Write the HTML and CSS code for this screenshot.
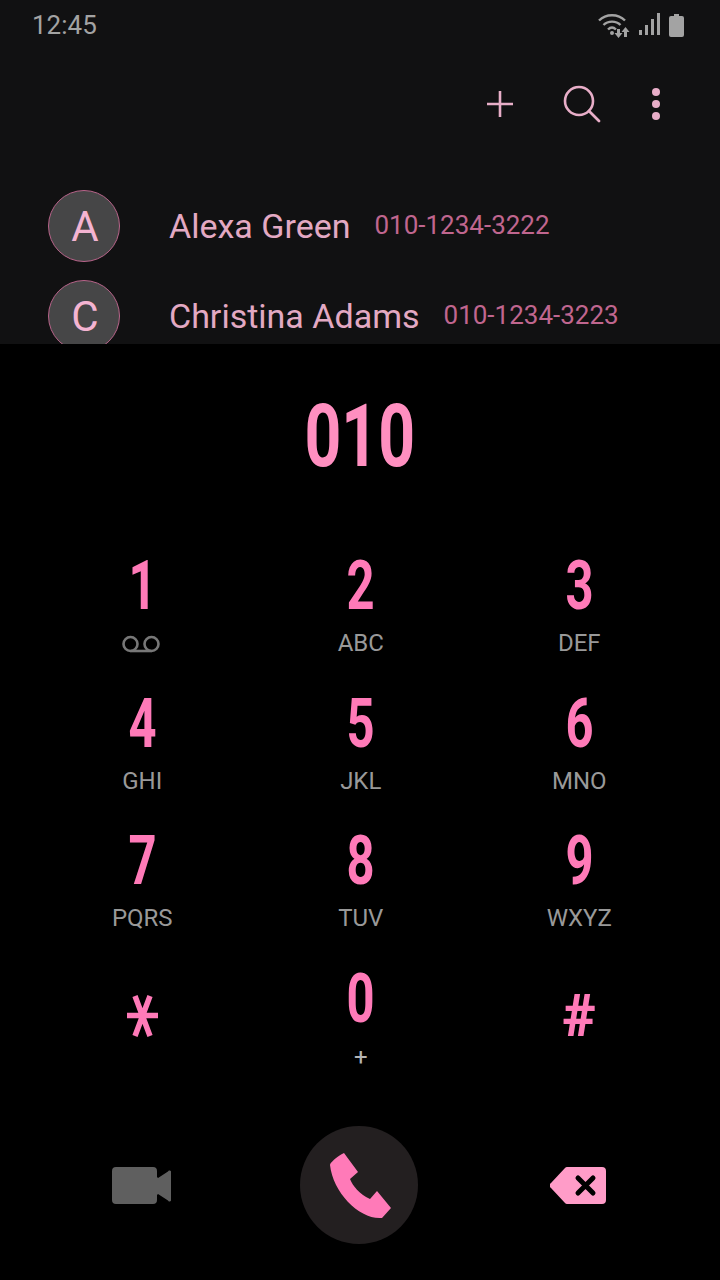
FILE: index.html
```html
<!DOCTYPE html>
<html lang="en">
<head>
<meta charset="utf-8">
<title>Phone</title>
<link rel="stylesheet" href="styles.css">
</head>
<body>
<div class="app">
  <section class="top">
    <div class="status">
      <span class="time">12:45</span>
      <div class="status-icons">
        <svg class="ic-wifi" width="32" height="26" viewBox="0 0 32 26"><g fill="none" stroke="#a3a3a3" stroke-width="2.4"><path d="M1 8.500C8 1.500 20 1.500 27 8.500"/><path d="M5.500 13C10 8.500 18 8.500 22.500 13"/><path d="M10 17.500C12.500 15 15.500 15 18 17.500"/></g><circle cx="14" cy="21" r="2" fill="#a3a3a3"/><path d="M19 17h3v4h2.500l-4 5-4-5H19zM26 25v-5h-2.500l4-5 4 5H29v5z" fill="#a3a3a3"/></svg>
        <svg class="ic-signal" width="22" height="24" viewBox="0 0 22 24"><g fill="#a3a3a3"><rect x="0" y="17" width="3" height="5"/><rect x="6" y="12" width="3" height="10"/><rect x="12" y="6" width="3" height="16"/><rect x="18" y="0" width="3" height="22"/></g></svg>
        <svg class="ic-batt" width="15" height="23" viewBox="0 0 15 23"><path d="M5 0h5v2h3a2 2 0 0 1 2 2v17a2 2 0 0 1-2 2H2a2 2 0 0 1-2-2V4a2 2 0 0 1 2-2h3z" fill="#a3a3a3"/></svg>
      </div>
    </div>
    <div class="actions">
      <svg class="act-plus" width="28" height="28" viewBox="0 0 28 28"><path d="M14 1v26M1 14h26" stroke="#e8aec8" stroke-width="2.600" fill="none"/></svg>
      <svg class="act-search" width="38" height="38" viewBox="0 0 38 38"><circle cx="16" cy="16" r="14" stroke="#e8aec8" stroke-width="2.600" fill="none"/><path d="M26 26l10 10" stroke="#e8aec8" stroke-width="2.800" stroke-linecap="round"/></svg>
      <svg class="act-more" width="10" height="34" viewBox="0 0 10 34"><g fill="#e8aec8"><circle cx="5" cy="5" r="4"/><circle cx="5" cy="17" r="4"/><circle cx="5" cy="29" r="4"/></g></svg>
    </div>
    <div class="contacts">
      <div class="contact">
        <div class="avatar">A</div>
        <span class="name">Alexa Green</span>
        <span class="phone">010-1234-3222</span>
      </div>
      <div class="contact">
        <div class="avatar">C</div>
        <span class="name">Christina Adams</span>
        <span class="phone">010-1234-3223</span>
      </div>
    </div>
  </section>
  <section class="dialer">
    <div class="entry"><span class="entry-num">010</span></div>
    <div class="keypad">
      <div class="key"><span class="digit">1</span><svg class="vm" width="40" height="18" viewBox="0 0 40 18"><g fill="none" stroke="#777" stroke-width="2.600"><circle cx="8.500" cy="9" r="7"/><circle cx="29.500" cy="9" r="7"/><path d="M8.500 16h21"/></g></svg></div>
      <div class="key"><span class="digit">2</span><span class="sub">ABC</span></div>
      <div class="key"><span class="digit">3</span><span class="sub">DEF</span></div>
      <div class="key"><span class="digit">4</span><span class="sub">GHI</span></div>
      <div class="key"><span class="digit">5</span><span class="sub">JKL</span></div>
      <div class="key"><span class="digit">6</span><span class="sub">MNO</span></div>
      <div class="key"><span class="digit">7</span><span class="sub">PQRS</span></div>
      <div class="key"><span class="digit">8</span><span class="sub">TUV</span></div>
      <div class="key"><span class="digit">9</span><span class="sub">WXYZ</span></div>
      <div class="key key-sym"><svg class="star" width="31" height="42" viewBox="0 0 31 42"><path d="M8 1l15 40M23 1L8 41M0 20.500h31" stroke="#ff7ab8" stroke-width="5.500" fill="none"/></svg></div>
      <div class="key"><span class="digit">0</span><span class="sub sub-plus">+</span></div>
      <div class="key key-sym"><span class="digit hash">#</span></div>
    </div>
    <div class="bottom">
      <div class="slot">
        <svg class="soft" width="60" height="38" viewBox="0 0 60 38"><path d="M4 1h37a4 4 0 0 1 4 4v6l1 1 10-6.500a1.500 1.500 0 0 1 3 1v27a1.500 1.500 0 0 1-3 1L46 28l-1 1v5a4 4 0 0 1-4 4H4a4 4 0 0 1-4-4V5a4 4 0 0 1 4-4z" fill="#5f5f5f"/></svg>
      </div>
      <div class="slot">
        <div class="call">
          <svg class="handset" width="62" height="66" viewBox="0 0 62 66"><path d="M14 0l14 19-8 7c3 7 9 15 20 20l7-8 14 17-9 10C30 67 3 40 0 12c0-2 6-8 14-12z" fill="#ff7ab8"/></svg>
        </div>
      </div>
      <div class="slot">
        <svg class="soft back" width="56" height="37" viewBox="0 0 56 37"><path d="M17 0h35a4 4 0 0 1 4 4v29a4 4 0 0 1-4 4H17a3 3 0 0 1-2-1L1 21a3 3 0 0 1 0-5L15 1a3 3 0 0 1 2-1z" fill="#ff9cc8"/><path d="M28 11l15 15M43 11L28 26" stroke="#000" stroke-width="5" stroke-linecap="round"/></svg>
      </div>
    </div>
  </section>
</div>
</body>
</html>
```
FILE: styles.css
```css
* { box-sizing: border-box; }
html, body { margin: 0; padding: 0; background: #000; }
body { font-family: Roboto, "Liberation Sans", sans-serif; }
.app { width: 720px; height: 1280px; overflow: hidden; display: flex; flex-direction: column; }

.top { height: 344px; overflow: hidden; background: #111112; flex: none; }
.status { height: 50px; display: flex; align-items: center; justify-content: space-between; padding: 0 36px 0 32px; }
.time { color: #a3a3a3; font-size: 26px; }
.status-icons { display: flex; align-items: center; gap: 8px; }
.ic-wifi { margin-right: 1px; }
.actions { height: 90px; display: flex; align-items: center; justify-content: flex-end; padding: 18px 59px 0 0; gap: 50px; }
.act-plus { margin-right: -1px; }
.contacts { padding: 50px 0 0 48px; display: flex; flex-direction: column; gap: 18px; }
.contact { display: flex; align-items: center; height: 72px; }
.avatar { width: 72px; height: 72px; padding-left: 2px; border-radius: 50%; flex: none; background: #464647; border: 1.500px solid #b8648a; color: #f4b4d2; font-size: 42px; display: flex; align-items: center; justify-content: center; }
.name { margin-left: 49px; font-size: 34px; color: #e3a9c3; }
.phone { margin-left: 24px; font-size: 26px; color: #c0668f; margin-top: -2px; }

.dialer { flex: 1; background: #000; display: flex; flex-direction: column; }
.entry { height: 180px; display: flex; justify-content: center; padding-top: 42px; }
.entry-num { font-size: 88px; line-height: 100px; font-weight: 700; color: #ff8fc0; display: inline-block; transform: scaleX(0.73); }
.keypad { display: grid; grid-template-columns: repeat(3, 218.5px); grid-auto-rows: 137.5px; padding: 0 33px; height: 550px; margin-top: 22px; }
.key { display: flex; flex-direction: column; align-items: center; }
.digit { font-size: 68px; line-height: 80px; font-weight: 700; color: #ff7ab8; display: block; transform: scaleX(0.72); }
.sub { font-size: 24px; line-height: 28px; color: #999; margin-top: 3px; }
.sub-plus { color: #b5b5b5; margin-top: 4px; }
.vm { margin-top: 9px; }
.key-sym { justify-content: center; padding-bottom: 22px; }
.hash { font-size: 60px; line-height: 60px; font-weight: 900; transform: scaleX(0.95); }
.bottom { display: grid; grid-template-columns: repeat(3, 218.5px); padding: 0 33px; height: 118px; margin-top: 30px; }
.slot { display: flex; align-items: center; justify-content: center; }
.soft { filter: blur(0.6px); }
.back { margin-right: 2px; }
.call { width: 118px; height: 118px; margin-right: 4px; border-radius: 50%; background: #231f20; display: flex; align-items: center; justify-content: center; }
.handset { margin-left: 5px; margin-top: 1px; }
```
